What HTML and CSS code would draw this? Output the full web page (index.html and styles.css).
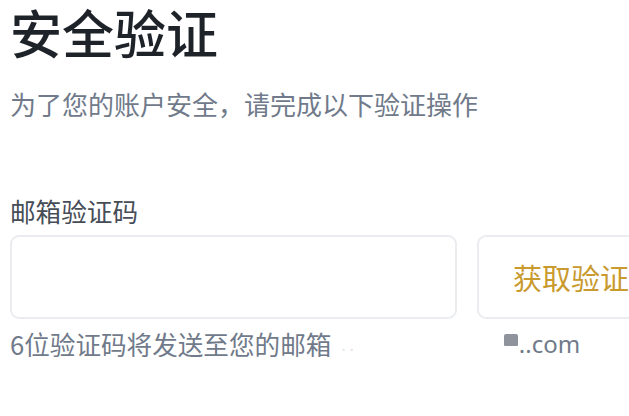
FILE: index.html
```html
<!DOCTYPE html>
<html lang="zh-CN">
<head>
<meta charset="utf-8">
<title>安全验证</title>
<link rel="stylesheet" href="styles.css">
</head>
<body>
<main class="page">
  <h1 class="title">安全验证</h1>
  <p class="subtitle">为了您的账户安全，请完成以下验证操作</p>
  <div class="field">
    <label class="label" for="code">邮箱验证码</label>
    <div class="row">
      <input id="code" class="input" type="text">
      <button class="send" type="button">获取验证码</button>
    </div>
    <div class="hint">
      <span class="hint-text">6位验证码将发送至您的邮箱</span>
      <span class="mask-dots">. .</span>
      <span class="email"><span class="mask-block"></span>..com</span>
    </div>
  </div>
</main>
</body>
</html>
```

FILE: styles.css
```css
html, body {
  margin: 0;
  padding: 0;
  overflow: hidden;
  background: #ffffff;
}

.page {
  padding: 0 0 0 10px;
  font-family: "Noto Sans CJK SC", "Noto Sans", sans-serif;
}

.title {
  margin: 0;
  font-size: 52px;
  line-height: 64px;
  font-weight: 500;
  color: #1e2329;
}

.subtitle {
  margin: 27px 0 0 0;
  font-size: 26px;
  line-height: 26px;
  color: #707a8a;
}

.field {
  margin-top: 81px;
}

.label {
  display: block;
  font-size: 25.6px;
  line-height: 26px;
  color: #474d57;
}

.row {
  display: flex;
  gap: 20px;
  margin-top: 11px;
}

.input {
  box-sizing: border-box;
  flex: 0 0 447px;
  width: 447px;
  height: 84px;
  border: 2px solid #eaecef;
  border-radius: 9px;
  background: #fff;
  outline: none;
  font: inherit;
}

.send {
  box-sizing: border-box;
  flex: 0 0 auto;
  height: 84px;
  padding: 0 34px;
  border: 2px solid #eaecef;
  border-radius: 9px;
  background: #fff;
  color: #c99a2e;
  font-family: "Noto Sans CJK SC", "Noto Sans", sans-serif;
  font-size: 29px;
  white-space: nowrap;
}

.hint {
  display: flex;
  align-items: center;
  margin-top: 12px;
  font-size: 25.6px;
  line-height: 26px;
  color: #707a8a;
}

.mask-dots {
  margin-left: 10px;
  color: #e4e6ea;
  font-size: 16px;
}

.email {
  display: inline-flex;
  align-items: center;
  margin-left: 150px;
  font-family: "Noto Sans", sans-serif;
  font-size: 24px;
}

.mask-block {
  display: inline-block;
  width: 14px;
  height: 12px;
  margin-right: 1px;
  margin-top: -8px;
  background: #8e939c;
  border-radius: 2px 2px 1px 1px;
}
```
